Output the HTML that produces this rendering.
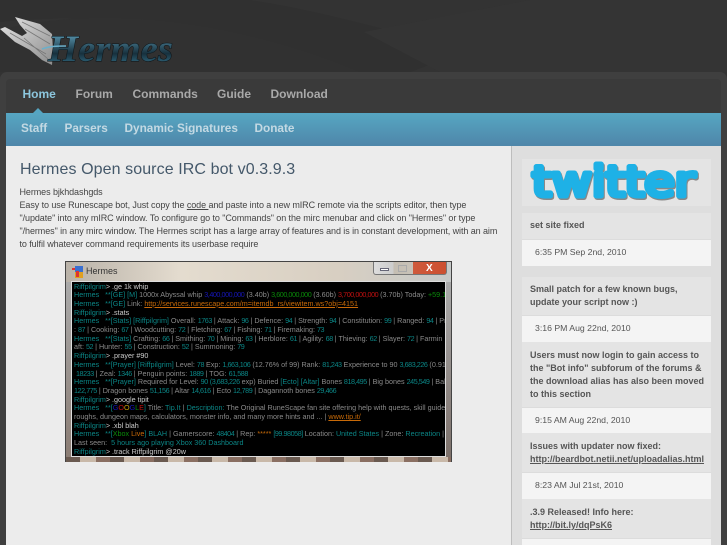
<!DOCTYPE html>
<html><head><meta charset="utf-8"><title>Hermes</title>
<style>
html,body{margin:0;padding:0;background:#333}
body{width:727px;height:545px;position:relative;overflow:hidden;font-family:"Liberation Sans",sans-serif}
.a{position:absolute;white-space:nowrap}
.n{font-weight:bold;font-size:12px;color:#a9a9a9;top:87px;line-height:15px}
.s{font-weight:bold;font-size:11.8px;color:#c3d9e3;top:121px;line-height:15px}
.b{font-size:9px;color:#444;left:19.5px;line-height:13px;letter-spacing:-.08px}
.box{position:absolute;left:522px;width:189px;background:#e4e4e4;border-bottom:1px solid #dcdcdc;box-sizing:border-box}
.d{position:absolute;left:522px;width:189px;background:#f4f4f4;font-size:8.7px;color:#555;line-height:25px;padding-left:13px;box-sizing:border-box}
.t{position:absolute;font-weight:bold;font-size:9px;color:#555;left:530px;line-height:13px;white-space:nowrap}
.t u{color:#555}
#term div{position:absolute;left:2px;font:7.2px/8.7px "Liberation Sans",sans-serif;color:#8a8a8a;white-space:nowrap;filter:blur(.3px)}
#term i{font-style:normal;color:#0b8585}
#term em{font-style:normal;color:#0b8585;letter-spacing:-.45px}
#term b{font-weight:normal;color:#ccc}
</style></head><body>
<svg class="a" style="left:0;top:0" width="727" height="72">
<defs>
<linearGradient id="h" x1="0" y1="0" x2="0" y2="1"><stop offset="0" stop-color="#6ab0cc"/><stop offset=".6" stop-color="#17303d"/><stop offset="1" stop-color="#3f87a3"/></linearGradient>
<linearGradient id="w" x1="0" y1="0" x2="1" y2="1"><stop offset="0" stop-color="#e4e4e4"/><stop offset="1" stop-color="#8d8d8d"/></linearGradient>
</defs>
<rect width="727" height="72" fill="#333"/>
<path d="M0 0H250C330 12 400 35 470 50L410 72H300C220 30 120 10 0 22Z" fill="#303030"/>
<path d="M0 30C100 5 220 20 330 60L360 72H0Z" fill="#313131"/>
<path d="M364 32L530 0H727V72H440Z" fill="#343434"/>
<path d="M15 17L40 24L52 34L53 50L52 65L42 60L30 50L15 42L0 29L5 27L22 36L27 33L20 25Z" fill="url(#w)"/>
<path d="M22 22L50 36M25 29L50 44M10 33L46 54M24 38L48 59" stroke="#777" stroke-width=".8" fill="none"/>
<text x="48" y="61" font-family="Liberation Serif" font-style="italic" font-weight="bold" font-size="37" textLength="125" lengthAdjust="spacingAndGlyphs" fill="url(#h)" stroke="#0c1418" stroke-width="1" paint-order="stroke">Hermes</text>
<path d="M42 49C50 46 58 46 66 46" stroke="#6ab0cc" stroke-width="1.5" fill="none"/>
</svg>

<div class="a" style="left:0;top:72px;width:727px;height:473px;background:#3f3f3f;border-radius:7px 7px 0 0"></div>
<div class="a" style="left:6px;top:79px;width:715px;height:34px;background:#3a3a3a;border-radius:4px 4px 0 0"></div>
<div class="a n" style="left:22.5px;color:#8cc6dd">Home</div>
<div class="a n" style="left:75.5px">Forum</div>
<div class="a n" style="left:132.5px">Commands</div>
<div class="a n" style="left:217px">Guide</div>
<div class="a n" style="left:270.5px">Download</div>
<div class="a" style="left:33px;top:108px;width:0;height:0;border:5px solid transparent;border-top:0;border-bottom-color:#55a5c2"></div>
<div class="a" style="left:6px;top:113px;width:715px;height:32px;background:linear-gradient(#56a6c2,#4f87aa)"></div>
<div class="a s" style="left:21px">Staff</div>
<div class="a s" style="left:64.5px">Parsers</div>
<div class="a s" style="left:124.5px">Dynamic Signatures</div>
<div class="a s" style="left:254.5px">Donate</div>

<div class="a" style="left:6px;top:146px;width:505px;height:399px;background:#ececec"></div>
<div class="a" style="left:511px;top:146px;width:210px;height:399px;background:#dedede;border-left:1px solid #bdbdbd;box-sizing:border-box"></div>
<div class="a" style="left:6px;top:145px;width:715px;height:1px;background:#4f87aa"></div>

<div class="a" style="left:20px;top:160px;font-size:16px;line-height:20px;color:#44586a;letter-spacing:.09px">Hermes Open source IRC bot v0.3.9.3</div>
<div class="a b" style="top:186px">Hermes bjkhdashgds</div>
<div class="a b" style="top:199px">Easy to use Runescape bot, Just copy the <u>code </u>and paste into a new mIRC remote via the scripts editor, then type</div>
<div class="a b" style="top:212px">"/update" into any mIRC window. To configure go to "Commands" on the mirc menubar and click on "Hermes" or type</div>
<div class="a b" style="top:225px">"/hermes" in any mirc window. The Hermes script has a large array of features and is in constant development, with an aim</div>
<div class="a b" style="top:238px">to fulfil whatever command requirements its userbase require</div>

<!-- terminal -->
<div class="a" style="left:65px;top:261px;width:387px;height:201px;background:linear-gradient(90deg,#b9b2a8,#e4dccf 30%,#d8cfc2 70%,#c6c9c8);border:1px solid #444;box-sizing:border-box"></div>
<div class="a" style="left:66px;top:457px;width:385px;height:5px;background:repeating-linear-gradient(90deg,#6a5a50 0 14px,#c9b9a9 14px 30px,#8a6f62 30px 44px)"></div>
<div class="a" style="left:66px;top:282px;width:6px;height:175px;background:linear-gradient(#aaa,#8b7d74)"></div>
<div class="a" style="left:445px;top:282px;width:6px;height:175px;background:linear-gradient(#aaa,#7d716b)"></div>
<div class="a" style="left:71px;top:281px;width:375px;height:176px;background:#000;border:1px solid #ddd;box-sizing:border-box;overflow:hidden" id="term">
<div style="top:0.5px"><i>Riffpilgrim</i><b>&gt; .ge 1k whip</b></div>
<div style="top:9.2px"><i>Hermes &nbsp; **[GE] [M]</i> 1000x Abyssal whip <em style="color:#1616b8">3,400,000,000</em> (3.40b) <em style="color:#0a8a0a">3,600,000,000</em> (3.60b) <em style="color:#c01010">3,700,000,000</em> (3.70b) Today: <span style="color:#0a8a0a">+59.1k [59</span></div>
<div style="top:17.9px"><i>Hermes &nbsp; **[GE]</i> Link: <u style="color:#c86a08">http://services.runescape.com/m=itemdb_rs/viewitem.ws?obj=4151</u></div>
<div style="top:26.6px"><i>Riffpilgrim</i><b>&gt; .stats</b></div>
<div style="top:35.3px"><i>Hermes &nbsp; **[Stats] [Riffpilgrim]</i> Overall: <em>1763</em> | Attack: <em>96</em> | Defence: <em>94</em> | Strength: <em>94</em> | Constitution: <em>99</em> | Ranged: <em>94</em> | Pr</div>
<div style="top:44px">: <em>87</em> | Cooking: <em>67</em> | Woodcutting: <em>72</em> | Fletching: <em>67</em> | Fishing: <em>71</em> | Firemaking: <em>73</em></div>
<div style="top:52.7px"><i>Hermes &nbsp; **[Stats]</i> Crafting: <em>66</em> | Smithing: <em>70</em> | Mining: <em>63</em> | Herblore: <em>61</em> | Agility: <em>68</em> | Thieving: <em>62</em> | Slayer: <em>72</em> | Farmin</div>
<div style="top:61.4px">aft: <em>52</em> | Hunter: <em>55</em> | Construction: <em>52</em> | Summoning: <em>79</em></div>
<div style="top:70.1px"><i>Riffpilgrim</i><b>&gt; .prayer #90</b></div>
<div style="top:78.8px"><i>Hermes &nbsp; **[Prayer] [Riffpilgrim]</i> Level: <em>78</em> Exp: <em>1,663,106</em> (12.76% of 99) Rank: <em>81,243</em> Experience to 90 <em>3,683,226</em> (0.91% of</div>
<div style="top:87.5px">&nbsp;<em>18233</em> | Zeal: <em>1346</em> | Penguin points: <em>1889</em> | TOG: <em>61,588</em></div>
<div style="top:96.2px"><i>Hermes &nbsp; **[Prayer]</i> Required for Level: <em>90</em> <em>(3,683,226</em> exp) Buried <i>[Ecto] [Altar]</i> Bones <em>818,495</em> | Big bones <em>245,549</em> | Baby</div>
<div style="top:104.9px"><em>122,775</em> | Dragon bones <em>51,156</em> | Altar <em>14,616</em> | Ecto <em>12,789</em> | Dagannoth bones <em>29,466</em></div>
<div style="top:113.6px"><i>Riffpilgrim</i><b>&gt; .google tipit</b></div>
<div style="top:122.3px"><i>Hermes &nbsp; **[</i><span style="color:#1616b8">G</span><span style="color:#c01010">O</span><span style="color:#c8a008">O</span><span style="color:#1616b8">G</span><span style="color:#0a8a0a">L</span><span style="color:#c01010">E</span><i>]</i> Title: <i>Tip.It</i> | <i>Description:</i> The Original RuneScape fan site offering help with quests, skill guides</div>
<div style="top:131px">roughs, dungeon maps, calculators, monster info, and many more hints and ... | <u style="color:#c86a08">www.tip.it/</u></div>
<div style="top:139.7px"><i>Riffpilgrim</i><b>&gt; .xbl blah</b></div>
<div style="top:148.4px"><i>Hermes &nbsp; **[</i><span style="color:#0a8a0a">Xbox</span> <span style="color:#c86a08">Live</span><i>] BLAH</i> | Gamerscore: <em>48404</em> | Rep: <span style="color:#c86a08">*****</span> <em>[99.98058]</em> Location: <i>United States</i> | Zone: <i>Recreation</i> | St</div>
<div style="top:157.1px">Last seen: &nbsp;<i>5 hours ago playing Xbox 360 Dashboard</i></div>
<div style="top:165.8px"><i>Riffpilgrim</i><b>&gt; .track Riffpilgrim @20w</b></div>
</div>
<!-- app icon -->
<div class="a" style="left:75px;top:266px;width:8px;height:6px;background:#3a6fd0"></div>
<div class="a" style="left:75px;top:272px;width:8px;height:6px;background:#e0a020"></div>
<div class="a" style="left:72px;top:268px;width:3px;height:2px;background:#d33"></div>
<div class="a" style="left:76px;top:271px;width:3px;height:6px;background:#d33"></div>
<div class="a" style="left:86px;top:266px;font-size:9px;line-height:11px;color:#333">Hermes</div>
<div class="a" style="left:373px;top:262px;width:74px;height:13px;border:1px solid #777;border-top:0;border-radius:0 0 3px 3px;box-sizing:border-box;background:linear-gradient(90deg,#ddd 0,#ccc 27%,#c4bdb2 27%,#c8c2b8 54%,#cf5a3c 54%,#cc4f30 100%)"></div>
<div class="a" style="left:380px;top:268px;width:9px;height:3px;background:#fff;border:1px solid #667;box-sizing:border-box"></div>
<div class="a" style="left:398px;top:265px;width:9px;height:7px;border:1px solid #aaa;box-sizing:border-box"></div>
<div class="a" style="left:426px;top:263px;font-size:10px;font-weight:bold;line-height:11px;color:#fff">X</div>

<!-- sidebar -->
<div class="a" style="left:522px;top:159px;width:189px;height:47px;background:#e4e4e4"></div>
<svg class="a" style="left:522px;top:159px" width="189" height="47">
<text x="10" y="37" font-family="DejaVu Sans" font-size="42" textLength="163" lengthAdjust="spacingAndGlyphs" fill="#888" stroke="#888" stroke-width="5" stroke-linejoin="round" transform="translate(1,1.5)">twitter</text>
<text x="10" y="37" font-family="DejaVu Sans" font-size="42" textLength="163" lengthAdjust="spacingAndGlyphs" fill="#1eb1e6" stroke="#1eb1e6" stroke-width="5" stroke-linejoin="round">twitter</text>
</svg>

<div class="box" style="top:213px;height:27px"></div>
<div class="t" style="top:219px">set site fixed</div>
<div class="d" style="top:240px;height:26px;line-height:25px">6:35 PM Sep 2nd, 2010</div>

<div class="box" style="top:277px;height:39px"></div>
<div class="t" style="top:283px">Small patch for a few known bugs,</div>
<div class="t" style="top:296px">update your script now :)</div>
<div class="d" style="top:316px;height:26px">3:16 PM Aug 22nd, 2010</div>

<div class="box" style="top:342px;height:66px"></div>
<div class="t" style="top:348.5px">Users must now login to gain access to</div>
<div class="t" style="top:361.5px">the "Bot info" subforum of the forums &amp;</div>
<div class="t" style="top:374.5px">the download alias has also been moved</div>
<div class="t" style="top:387.5px">to this section</div>
<div class="d" style="top:408px;height:25px">9:15 AM Aug 22nd, 2010</div>

<div class="box" style="top:433px;height:40px"></div>
<div class="t" style="top:440px">Issues with updater now fixed:</div>
<div class="t" style="top:453px"><u>http://beardbot.netii.net/uploadalias.html</u></div>
<div class="d" style="top:473px;height:26px">8:23 AM Jul 21st, 2010</div>

<div class="box" style="top:499px;height:40px"></div>
<div class="t" style="top:506px">.3.9 Released! Info here:</div>
<div class="t" style="top:519px"><u>http://bit.ly/dqPsK6</u></div>
<div class="d" style="top:539px;height:6px"></div>
</body></html>
